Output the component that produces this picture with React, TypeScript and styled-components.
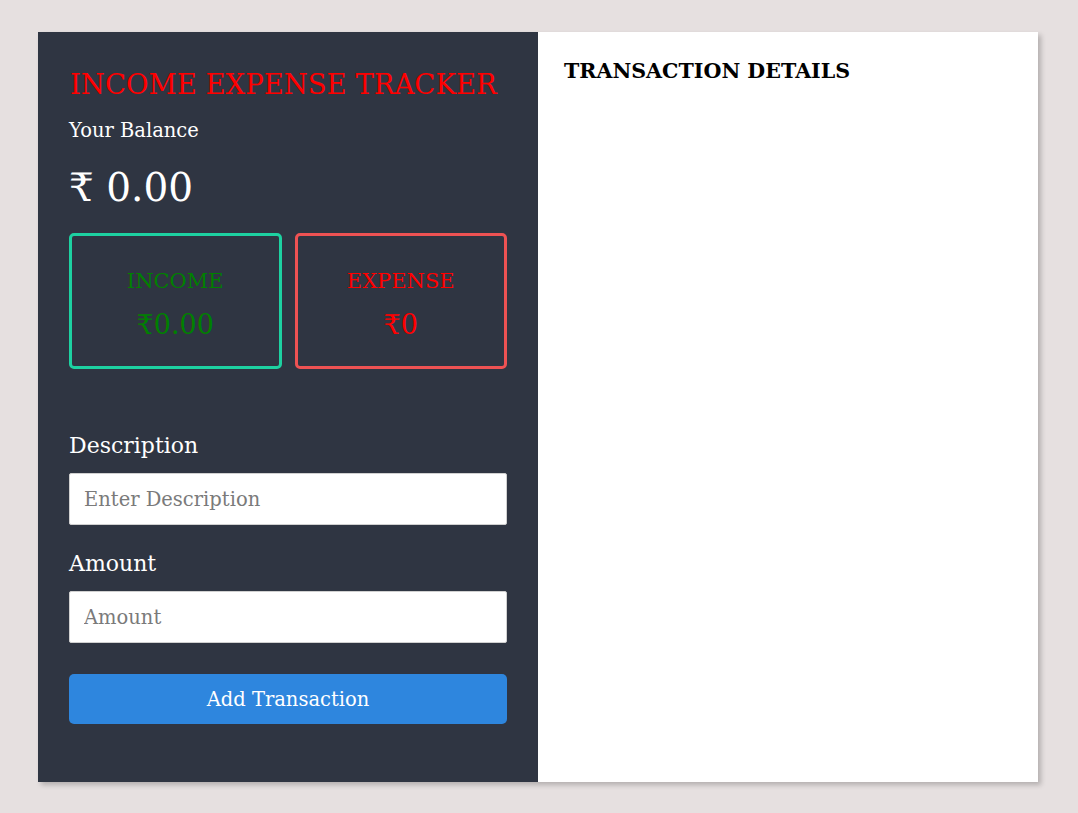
import React from "react";
import styled, { createGlobalStyle } from "styled-components";

const Global = createGlobalStyle`
  html, body { margin: 0; padding: 0; }
  body {
    background: #e6e0e0;
    font-family: "DejaVu Serif", "Liberation Serif", serif;
  }
  * { box-sizing: border-box; }
`;

const Page = styled.div`
  padding: 32px 0 0 38px;
  min-height: 813px;
`;

const Card = styled.div`
  display: flex;
  width: 1000px;
  height: 750px;
  box-shadow: 3px 3px 5px rgba(0, 0, 0, 0.22);
`;

const Left = styled.div`
  width: 500px;
  background: #2f3542;
  padding: 34px 31px 0 31px;
  display: flex;
  flex-direction: column;
`;

const Right = styled.div`
  width: 500px;
  background: #ffffff;
  padding: 25px 26px;
`;

const Title = styled.h1`
  margin: 0;
  color: #ff0000;
  font-weight: 400;
  font-size: 27.5px;
  line-height: 36px;
  padding-left: 1px;
`;

const BalanceLabel = styled.div`
  color: #ffffff;
  font-size: 19.5px;
  margin-top: 16px;
  line-height: 26px;
`;

const Balance = styled.div`
  color: #ffffff;
  font-size: 39px;
  line-height: 48px;
  margin-top: 20px;
`;

const Boxes = styled.div`
  display: flex;
  gap: 13px;
  margin-top: 21px;
`;

const Box = styled.div<{ $border: string; $color: string }>`
  flex: 1;
  height: 136px;
  border: 3px solid ${(p) => p.$border};
  border-radius: 5px;
  display: flex;
  flex-direction: column;
  align-items: center;
  justify-content: center;
  color: ${(p) => p.$color};
  padding-top: 5px;
`;

const BoxLabel = styled.div`
  font-size: 21px;
  line-height: 28px;
`;

const BoxValue = styled.div`
  font-size: 27px;
  line-height: 32px;
  margin-top: 14px;
`;

const Label = styled.label`
  display: block;
  color: #ffffff;
  font-size: 22px;
  line-height: 28px;
`;

const Input = styled.input`
  display: block;
  width: 100%;
  height: 52px;
  border: 1px solid #d0d0d0;
  border-radius: 2px;
  background: #ffffff;
  padding: 0 14px;
  font-family: "DejaVu Serif", "Liberation Serif", serif;
  font-size: 19.5px;
  margin-top: 13px;
  outline: none;
  &::placeholder { color: #7a7a7a; }
`;

const Field = styled.div<{ $top: number }>`
  margin-top: ${(p) => p.$top}px;
`;

const Button = styled.button`
  margin-top: 31px;
  width: 100%;
  height: 50px;
  border: none;
  border-radius: 5px;
  background: #2e86de;
  color: #ffffff;
  font-family: "DejaVu Serif", "Liberation Serif", serif;
  font-size: 19.5px;
`;

const DetailsTitle = styled.h2`
  margin: 0;
  font-size: 20.6px;
  font-weight: 700;
  color: #000;
  line-height: 28px;
`;

export default function App() {
  return (
    <>
      <Global />
      <Page>
        <Card>
          <Left>
            <Title>INCOME EXPENSE TRACKER</Title>
            <BalanceLabel>Your Balance</BalanceLabel>
            <Balance>₹ 0.00</Balance>
            <Boxes>
              <Box $border="#1dd1a1" $color="#008000">
                <BoxLabel>INCOME</BoxLabel>
                <BoxValue>₹0.00</BoxValue>
              </Box>
              <Box $border="#ee5253" $color="#ff0000">
                <BoxLabel>EXPENSE</BoxLabel>
                <BoxValue>₹0</BoxValue>
              </Box>
            </Boxes>
            <Field $top={63}>
              <Label>Description</Label>
              <Input placeholder="Enter Description" />
            </Field>
            <Field $top={25}>
              <Label>Amount</Label>
              <Input placeholder="Amount" />
            </Field>
            <Button>Add Transaction</Button>
          </Left>
          <Right>
            <DetailsTitle>TRANSACTION DETAILS</DetailsTitle>
          </Right>
        </Card>
      </Page>
    </>
  );
}
